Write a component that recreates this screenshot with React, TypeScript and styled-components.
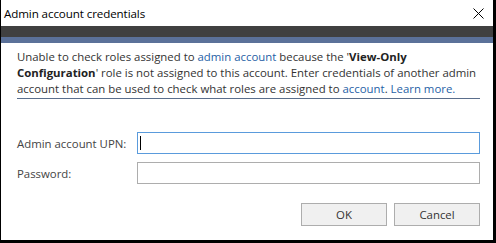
import React from 'react';
import styled, { createGlobalStyle } from 'styled-components';

const GlobalStyle = createGlobalStyle`
  html, body {
    margin: 0;
    padding: 0;
    background: #ffffff;
  }
  body {
    font-family: "Open Sans", "Noto Sans", sans-serif;
  }
`;

const Window = styled.div`
  width: 496px;
  height: 243px;
  box-sizing: border-box;
  background: #ffffff;
  border-left: 1px solid #000000;
  border-right: 3px solid #000000;
  border-bottom: 3px solid #000000;
  display: flex;
  flex-direction: column;
`;

const TitleBar = styled.div`
  height: 26px;
  display: flex;
  align-items: center;
  justify-content: space-between;
  padding: 0 9px 0 3px;
`;

const Title = styled.span`
  font-size: 11.6px;
  color: #000000;
  letter-spacing: -0.1px;
`;

const CloseButton = styled.button`
  width: 12px;
  height: 12px;
  padding: 0;
  border: none;
  background: none;
  display: flex;
  align-items: center;
  justify-content: center;
`;

const DarkBand = styled.div`
  height: 11px;
  background: #404040;
`;

const AccentBand = styled.div`
  height: 6px;
  background: #5b7199;
`;

const Body = styled.div`
  padding: 6px 13px 0 16px;
  display: flex;
  flex-direction: column;
`;

const Message = styled.p`
  margin: 0;
  font-size: 11.4px;
  line-height: 16px;
  color: #333333;
  padding-bottom: 1px;
  border-bottom: 1px solid #5a6e8c;
`;

const Link = styled.a`
  color: #1f5fa6;
  text-decoration: none;
`;

const Strong = styled.b`
  font-weight: 700;
  color: #222222;
`;

const Form = styled.div`
  margin-top: 33px;
  display: flex;
  flex-direction: column;
  gap: 8px;
`;

const Row = styled.div`
  display: flex;
  align-items: center;
`;

const Label = styled.label`
  width: 120px;
  font-size: 11.4px;
  color: #444444;
`;

const Field = styled.div<{ $focused?: boolean }>`
  flex: 1;
  height: 22px;
  box-sizing: border-box;
  border: 1px solid ${(p) => (p.$focused ? '#5a9bdc' : '#adadad')};
  display: flex;
  align-items: center;
  padding-left: 2px;
`;

const Caret = styled.span`
  width: 1px;
  height: 14px;
  background: #000000;
`;

const Actions = styled.div`
  margin-top: 19px;
  display: flex;
  justify-content: flex-end;
  gap: 7px;
`;

const Button = styled.button`
  width: 86px;
  height: 23px;
  box-sizing: border-box;
  border: 1px solid #adadad;
  background: #f0f0f0;
  font-family: "Open Sans", "Noto Sans", sans-serif;
  font-size: 11.4px;
  color: #333333;
  padding: 0;
`;

export default function App() {
  return (
    <>
      <GlobalStyle />
      <Window>
        <TitleBar>
          <Title>Admin account credentials</Title>
          <CloseButton aria-label="Close">
            <svg width="11" height="11" viewBox="0 0 11 11">
              <path d="M0.5 0.5 L10.5 10.5 M10.5 0.5 L0.5 10.5" stroke="#000" strokeWidth="1" fill="none" />
            </svg>
          </CloseButton>
        </TitleBar>
        <DarkBand />
        <AccentBand />
        <Body>
          <Message>
            Unable to check roles assigned to <Link href="#">admin account</Link> because the '
            <Strong>View-Only Configuration</Strong>' role is not assigned to this account. Enter
            credentials of another admin account that can be used to check what roles are assigned
            to <Link href="#">account</Link>. <Link href="#">Learn more.</Link>
          </Message>
          <Form>
            <Row>
              <Label>Admin account UPN:</Label>
              <Field $focused>
                <Caret />
              </Field>
            </Row>
            <Row>
              <Label>Password:</Label>
              <Field />
            </Row>
          </Form>
          <Actions>
            <Button>OK</Button>
            <Button>Cancel</Button>
          </Actions>
        </Body>
      </Window>
    </>
  );
}
